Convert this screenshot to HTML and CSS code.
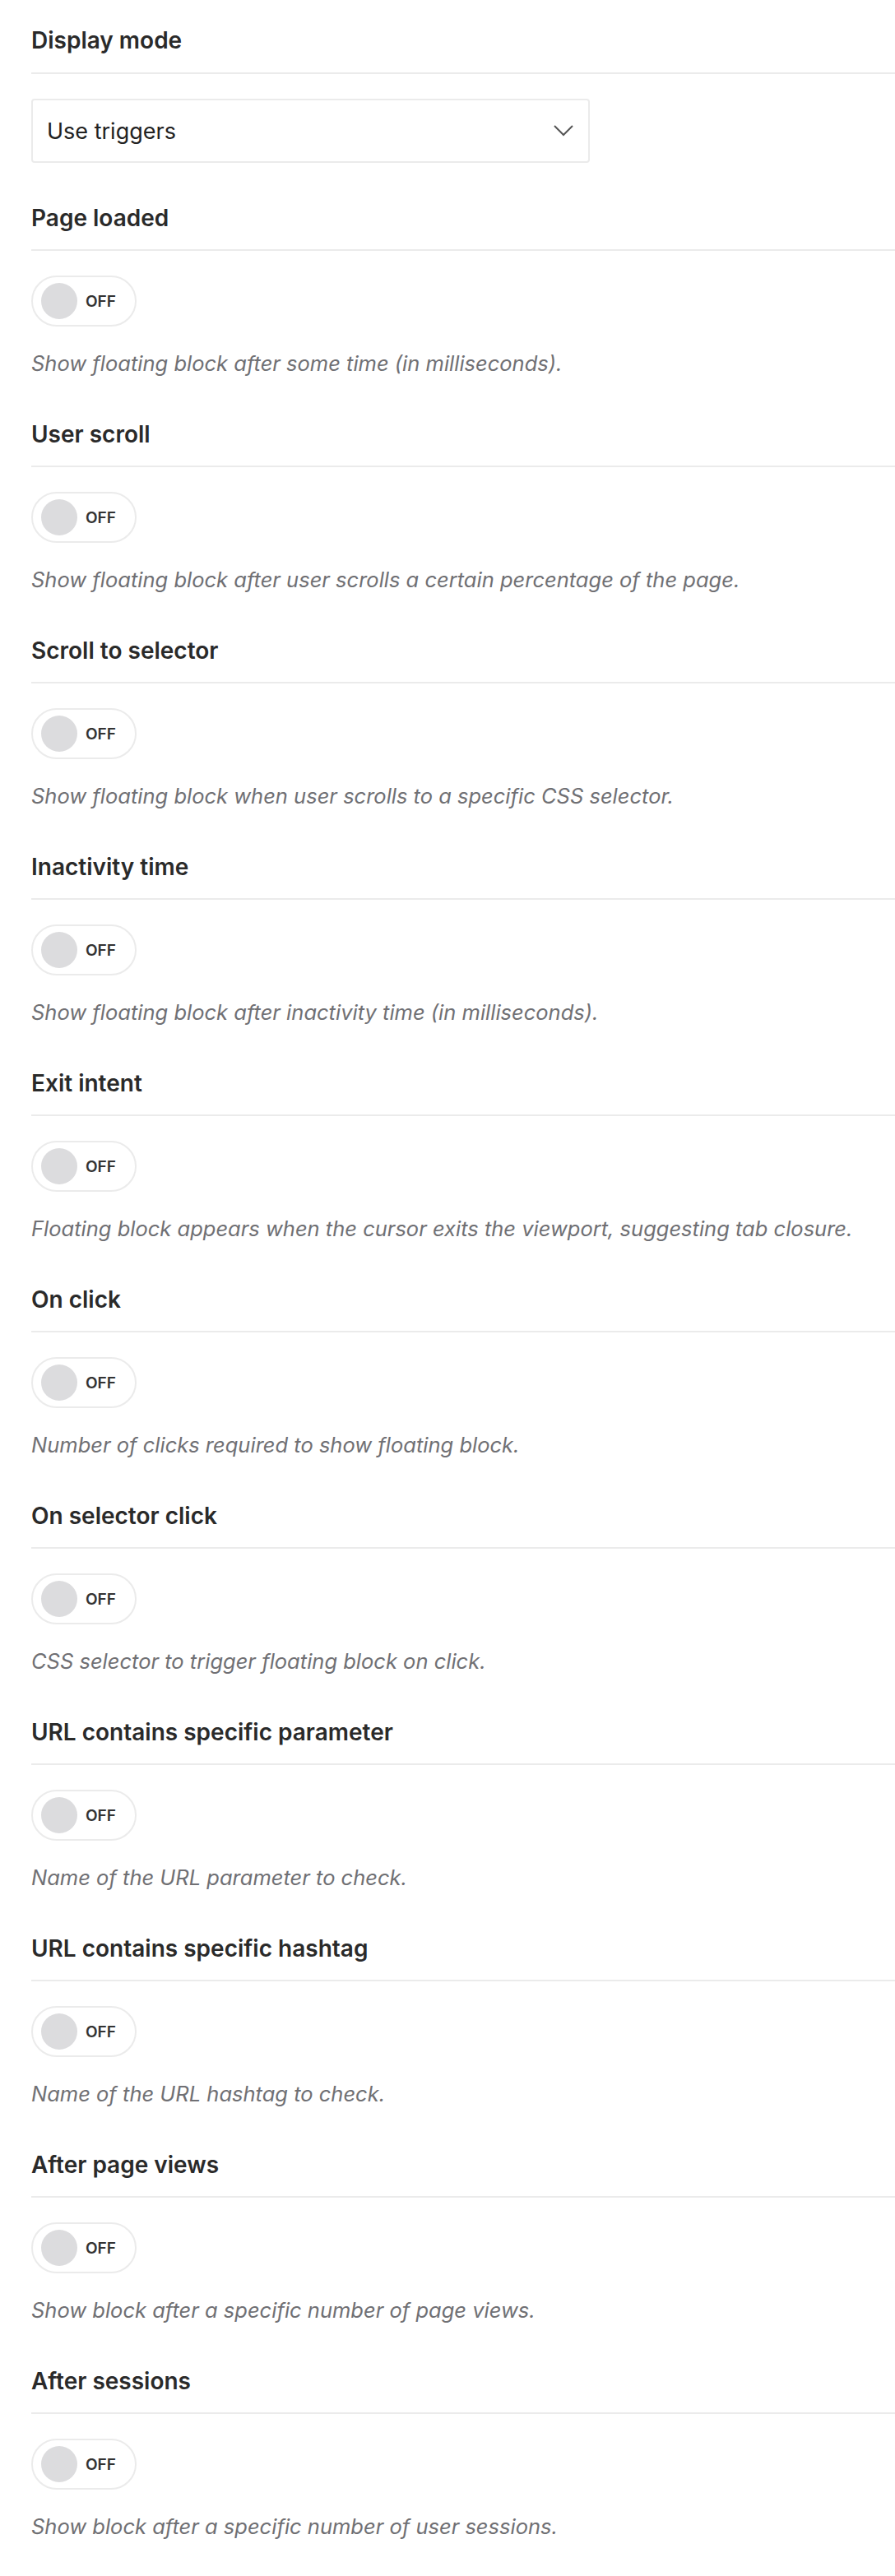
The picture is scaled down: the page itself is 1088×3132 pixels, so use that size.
FILE: index.html
```html
<!DOCTYPE html>
<html lang="en">
<head>
    <meta charset="UTF-8">
    <meta name="viewport" content="width=device-width, initial-scale=1.0">
    <title>Floating Block - Display Settings</title>
    <link rel="stylesheet" href="styles.css">
</head>
<body>
    <div class="settings">
        <div class="field field-select">
            <h3 class="field-title">Display mode</h3>
            <div class="select-wrap">
                <select id="displayMode" class="select-control">
                    <option>Use triggers</option>
                    <option>Always show</option>
                </select>
                <svg class="select-arrow" width="24" height="14" viewBox="0 0 24 14">
                    <polyline points="1,1 12,12 23,1" fill="none" stroke="#555" stroke-width="2"/>
                </svg>
            </div>
        </div>

        <div class="field">
            <h3 class="field-title">Page loaded</h3>
            <label class="toggle"><input type="checkbox"><span class="toggle-knob"></span><span class="toggle-text">OFF</span></label>
            <p class="field-help">Show floating block after some time (in milliseconds).</p>
        </div>

        <div class="field">
            <h3 class="field-title">User scroll</h3>
            <label class="toggle"><input type="checkbox"><span class="toggle-knob"></span><span class="toggle-text">OFF</span></label>
            <p class="field-help">Show floating block after user scrolls a certain percentage of the page.</p>
        </div>

        <div class="field">
            <h3 class="field-title">Scroll to selector</h3>
            <label class="toggle"><input type="checkbox"><span class="toggle-knob"></span><span class="toggle-text">OFF</span></label>
            <p class="field-help">Show floating block when user scrolls to a specific CSS selector.</p>
        </div>

        <div class="field">
            <h3 class="field-title">Inactivity time</h3>
            <label class="toggle"><input type="checkbox"><span class="toggle-knob"></span><span class="toggle-text">OFF</span></label>
            <p class="field-help">Show floating block after inactivity time (in milliseconds).</p>
        </div>

        <div class="field">
            <h3 class="field-title">Exit intent</h3>
            <label class="toggle"><input type="checkbox"><span class="toggle-knob"></span><span class="toggle-text">OFF</span></label>
            <p class="field-help">Floating block appears when the cursor exits the viewport, suggesting tab closure.</p>
        </div>

        <div class="field">
            <h3 class="field-title">On click</h3>
            <label class="toggle"><input type="checkbox"><span class="toggle-knob"></span><span class="toggle-text">OFF</span></label>
            <p class="field-help">Number of clicks required to show floating block.</p>
        </div>

        <div class="field">
            <h3 class="field-title">On selector click</h3>
            <label class="toggle"><input type="checkbox"><span class="toggle-knob"></span><span class="toggle-text">OFF</span></label>
            <p class="field-help">CSS selector to trigger floating block on click.</p>
        </div>

        <div class="field">
            <h3 class="field-title">URL contains specific parameter</h3>
            <label class="toggle"><input type="checkbox"><span class="toggle-knob"></span><span class="toggle-text">OFF</span></label>
            <p class="field-help">Name of the URL parameter to check.</p>
        </div>

        <div class="field">
            <h3 class="field-title">URL contains specific hashtag</h3>
            <label class="toggle"><input type="checkbox"><span class="toggle-knob"></span><span class="toggle-text">OFF</span></label>
            <p class="field-help">Name of the URL hashtag to check.</p>
        </div>

        <div class="field">
            <h3 class="field-title">After page views</h3>
            <label class="toggle"><input type="checkbox"><span class="toggle-knob"></span><span class="toggle-text">OFF</span></label>
            <p class="field-help">Show block after a specific number of page views.</p>
        </div>

        <div class="field">
            <h3 class="field-title">After sessions</h3>
            <label class="toggle"><input type="checkbox"><span class="toggle-knob"></span><span class="toggle-text">OFF</span></label>
            <p class="field-help">Show block after a specific number of user sessions.</p>
        </div>
    </div>

    <script>
        // Switch label text between ON and OFF
        document.querySelectorAll('.toggle input').forEach(function(input) {
            input.addEventListener('change', function() {
                this.parentNode.querySelector('.toggle-text').textContent = this.checked ? 'ON' : 'OFF';
            });
        });
    </script>
</body>
</html>
```

FILE: styles.css
```css
:root {
    --text-color: #2a2a2a;
    --help-color: #707074;
    --line-color: #ebebeb;
    --knob-color: #dcdcde;
}

* {
    margin: 0;
    padding: 0;
    box-sizing: border-box;
    font-family: Inter, 'Noto Sans', sans-serif;
}

body {
    background-color: #ffffff;
    color: var(--text-color);
}

.settings {
    padding: 33px 0 60px 38px;
}

.field {
    margin-bottom: 55px;
}

.field-select {
    margin-bottom: 51px;
}

.field-title {
    font-size: 28px;
    line-height: 32px;
    font-weight: 600;
    padding-bottom: 22px;
    border-bottom: 2px solid var(--line-color);
    margin-bottom: 30px;
}

.field-select .field-title {
    padding-bottom: 23px;
}

.select-wrap {
    position: relative;
    width: 679px;
}

.select-control {
    display: block;
    width: 100%;
    height: 78px;
    padding: 0 60px 0 17px;
    border: 2px solid var(--line-color);
    border-radius: 4px;
    background-color: #fff;
    font-size: 27px;
    color: #222;
    appearance: none;
    -webkit-appearance: none;
}

.select-control:focus {
    outline: none;
}

.select-arrow {
    position: absolute;
    right: 20px;
    top: 32px;
    pointer-events: none;
}

.toggle {
    display: inline-flex;
    align-items: center;
    gap: 10px;
    height: 62px;
    padding: 0 23px 0 10px;
    border: 2px solid var(--line-color);
    border-radius: 31px;
    background-color: #fff;
    cursor: pointer;
    vertical-align: top;
}

.toggle input {
    display: none;
}

.toggle-knob {
    width: 44px;
    height: 44px;
    border-radius: 50%;
    background-color: var(--knob-color);
}

.toggle-text {
    font-size: 19px;
    font-weight: 600;
    color: #333;
}

.toggle input:checked + .toggle-knob {
    background-color: #3a7bd5;
}

.field-help {
    margin-top: 30px;
    font-size: 25.5px;
    line-height: 30px;
    font-style: italic;
    color: var(--help-color);
}
```
